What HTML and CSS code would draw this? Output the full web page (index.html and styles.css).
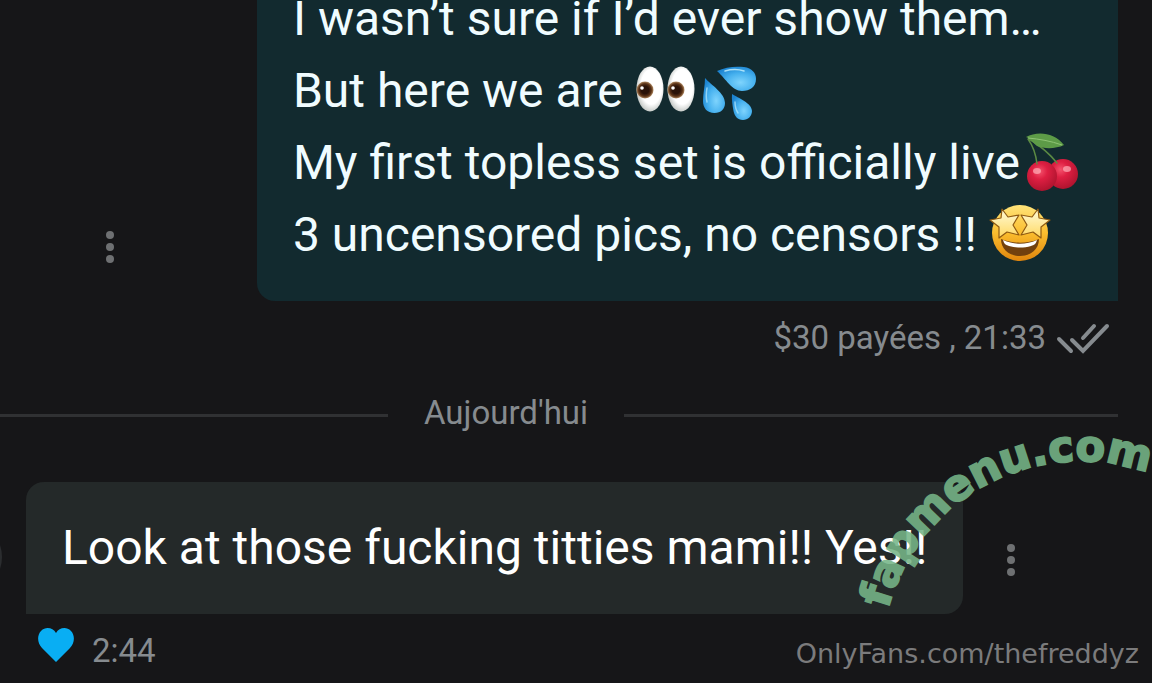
FILE: index.html
```html
<!DOCTYPE html>
<html lang="fr">
<head>
    <meta charset="UTF-8">
    <meta name="viewport" content="width=device-width, initial-scale=1.0">
    <title>Messages</title>
    <link rel="stylesheet" href="styles.css">
</head>
<body>

    <main class="thread">
        <div class="row row-sent">
            <button class="menu" type="button" aria-label="Options">
                <span class="dot"></span><span class="dot"></span><span class="dot"></span>
            </button>
            <div class="bubble bubble-sent">
                <p>I wasn’t sure if I’d ever show them…</p>
                <p>But here we are <svg class="emoji" viewBox="0 0 60 60" role="img" aria-label="eyes">
                    <defs>
                        <radialGradient id="white" cx="55%" cy="45%" r="55%">
                            <stop offset="70%" stop-color="#fff"/>
                            <stop offset="100%" stop-color="#c9cdca"/>
                        </radialGradient>
                        <radialGradient id="iris">
                            <stop offset="45%" stop-color="#2b1308"/>
                            <stop offset="75%" stop-color="#5c3317"/>
                            <stop offset="100%" stop-color="#b08a62"/>
                        </radialGradient>
                    </defs>
                    <ellipse cx="11" cy="28" rx="13.5" ry="22.5" fill="url(#white)"/>
                    <ellipse cx="42" cy="28" rx="13.5" ry="22.5" fill="url(#white)"/>
                    <circle cx="6" cy="29" r="8.5" fill="url(#iris)"/>
                    <circle cx="37" cy="29" r="8.5" fill="url(#iris)"/>
                    <circle cx="3" cy="27" r="1.8" fill="#fff"/>
                    <circle cx="34" cy="27" r="1.8" fill="#fff"/>
                </svg><svg class="emoji" viewBox="0 0 60 60" role="img" aria-label="sweat droplets">
                    <defs>
                        <radialGradient id="drop" cx="60%" cy="65%" r="70%">
                            <stop offset="0%" stop-color="#7fd4fd"/>
                            <stop offset="55%" stop-color="#45b0ee"/>
                            <stop offset="100%" stop-color="#1c83d0"/>
                        </radialGradient>
                    </defs>
                    <path d="M14 10C22 6 32 5 41 6c8 1 12 6 12 12 0 8-6 12-14 12C29 30 23 18 14 10z" fill="url(#drop)"/>
                    <path d="M2 17C8 24 22 32 22 42c0 6-4 10-10.500 10C4 52 0 47 0 40 0 32 2 25 2 17z" fill="url(#drop)"/>
                    <path d="M29 33c6 4 20 9 20 17 0 5-4 9-9 9-5.500 0-8.500-4-9.500-9-1-6-2-11-1.500-17z" fill="url(#drop)"/>
                    <path d="M22 10c7-2 13-2 19 0" fill="none" stroke="#c8f2ff" stroke-width="1.500" stroke-linecap="round" opacity=".8"/>
                    <path d="M4 27c-1 6-1 10 0 14M32 41c0 5 1 8 3 11" fill="none" stroke="#b5eaff" stroke-width="1.500" stroke-linecap="round" opacity=".7"/>
                </svg></p>
                <p>My first topless set is officially live<svg class="emoji" viewBox="0 0 60 60" role="img" aria-label="cherries">
                    <defs>
                        <radialGradient id="cherry" cx="42%" cy="35%" r="65%">
                            <stop offset="0%" stop-color="#f4526c"/>
                            <stop offset="40%" stop-color="#de1f42"/>
                            <stop offset="100%" stop-color="#b0142f"/>
                        </radialGradient>
                    </defs>
                    <circle cx="39" cy="41" r="15" fill="url(#cherry)"/>
                    <circle cx="18" cy="43" r="15" fill="url(#cherry)"/>
                    <path d="M4 6c5 7 8 16 9 25M5 6c10 6 20 14 28 24" fill="none" stroke="#5b8a43" stroke-width="1.500" stroke-linecap="round"/>
                    <path d="M2 4C13-2 30-1 40 12c-8 4-20 4-27 1C9 10 7 6 2 4z" fill="#5d9b47"/>
                    <path d="M4 5c11 1 23 3 34 7" fill="none" stroke="#8fc474" stroke-width="1"/>
                    <ellipse cx="13" cy="38" rx="4" ry="3" fill="#ffb0b9" opacity=".7"/>
                    <ellipse cx="43" cy="36" rx="4" ry="3" fill="#ffb0b9" opacity=".7"/>
                </svg></p>
                <p>3 uncensored pics, no censors !! <svg class="emoji" viewBox="0 0 60 60" role="img" aria-label="star-struck">
                    <defs>
                        <linearGradient id="face" x2="0" y2="1">
                            <stop offset="0%" stop-color="#ffe47a"/>
                            <stop offset="50%" stop-color="#fbbd2e"/>
                            <stop offset="100%" stop-color="#df850d"/>
                        </linearGradient>
                        <linearGradient id="star" x2="0" y2="1">
                            <stop offset="0%" stop-color="#fffbd9"/>
                            <stop offset="100%" stop-color="#ffd860"/>
                        </linearGradient>
                    </defs>
                    <circle cx="27" cy="28" r="28" fill="url(#face)"/>
                    <path d="M8 34c12 5 26 5 38 0 0 10-8 17-19 17S8 44 8 34z" fill="#71400e"/>
                    <path d="M10 35c11 5 23 5 34 0-1 4-3 5-6 6-7 2-15 2-22 0-3-1-5-2-6-6z" fill="#fff"/>
                    <g fill="url(#star)" stroke="#8f5a12" stroke-width="1.200" stroke-linejoin="round">
                        <path d="M9 4l6 8 11-2-6 10 6 10-12-3-8 6 0-11-9-7 11-2z"/>
                        <path d="M45 4l-6 8-11-2 6 10-6 10 12-3 8 6 0-11 9-7-11-2z"/>
                    </g>
                </svg></p>
            </div>
        </div>
        <div class="meta meta-sent">
            <span>$30 payées , 21:33</span>
            <svg class="checks" viewBox="0 0 54 32" role="img" aria-label="Lu">
                <path d="M3 17l12 12M16 18l11 11L51 4M27 16L38 4" fill="none" stroke="currentColor" stroke-width="4" stroke-linecap="round"/>
            </svg>
        </div>

        <div class="separator"><span>Aujourd'hui</span></div>

        <div class="row">
            <span class="avatar"></span>
            <div class="bubble bubble-received">
                <p>Look at those fucking titties mami!! Yes!!</p>
            </div>
            <button class="menu" type="button" aria-label="Options">
                <span class="dot"></span><span class="dot"></span><span class="dot"></span>
            </button>
        </div>
        <div class="meta">
            <button class="like" type="button" aria-label="J'aime">
                <svg viewBox="0 0 36 34"><path d="M18 34L4 20C-1 15-1 7 3 3c5-5 12-3 15 2 3-5 10-7 15-2 4 4 4 12-1 17z" fill="#09aef3"/></svg>
            </button>
            <span>2:44</span>
        </div>
    </main>

    <svg class="stamp" viewBox="0 0 312 200" role="img" aria-label="fapmenu.com">
        <path id="arc" d="M48 169A199 199 0 0 1 240 21A199 199 0 0 1 380 79" fill="none"/>
        <text><textPath href="#arc">fapmenu.com</textPath></text>
    </svg>
    <div class="credit">OnlyFans.com/thefreddyz</div>

</body>
</html>
```
FILE: styles.css
```css
* {
    box-sizing: border-box;
}
body {
    margin: 0;
    background: #161618;
    color: #868b8f;
    font-family: Roboto, sans-serif;
    font-size: 33px;
    line-height: 38px;
}
p {
    margin: 0;
}
button {
    padding: 0;
    border: 0;
    background: none;
    cursor: pointer;
}

/* newest message stays at the bottom, older ones run off the top */
.thread {
    display: flex;
    flex-direction: column;
    justify-content: flex-end;
    height: 100vh;
    overflow: hidden;
    padding-right: 34px;
}
.row {
    display: flex;
    flex-shrink: 0;
    align-items: flex-end;
}
.row-sent {
    justify-content: flex-end;
}
.bubble {
    padding: 30px 36px;
    border-radius: 18px;
    font-size: 48px;
    line-height: 72px;
}
.bubble-sent {
    padding-right: 34px;
    background: #122a2f;
    color: #f0fcff;
    border-bottom-right-radius: 0;
}
.bubble-received {
    background: #242929;
    color: #fff;
    border-bottom-left-radius: 0;
}
.emoji {
    width: 60px;
    height: 60px;
    margin-left: 4px;
    vertical-align: -14px;
    overflow: visible;
}

.menu {
    display: flex;
    flex-direction: column;
    align-items: center;
    gap: 4px;
    width: 48px;
    margin: 0 24px 38px;
}
.row-sent .menu {
    margin-right: 123px;
}
.dot {
    width: 8px;
    height: 8px;
    border-radius: 50%;
    background: #6e7072;
}
.avatar {
    flex-shrink: 0;
    width: 74px;
    height: 74px;
    margin: 0 24px 20px -72px;
    border-radius: 50%;
    background: #2b2d2f;
}

.meta {
    display: flex;
    flex-shrink: 0;
    align-items: center;
    gap: 18px;
    padding: 18px 8px 13px 38px;
}
.meta-sent {
    justify-content: flex-end;
    gap: 10px;
}
.checks {
    width: 54px;
    height: 32px;
}
.like {
    height: 34px;
    margin: -8px 0 4px;
}
.like svg {
    display: block;
    width: 36px;
    height: 34px;
}

.separator {
    display: flex;
    flex-shrink: 0;
    align-items: center;
    gap: 36px;
    padding: 24px 0 50px;
}
.separator::before,
.separator::after {
    content: "";
    flex: 388;
    height: 3px;
    margin-top: 4px;
    background: #303133;
}
.separator::after {
    flex: 494;
}

/* marks laid over the conversation */
.stamp {
    position: absolute;
    right: 0;
    bottom: 43px;
    width: 312px;
    height: 200px;
    overflow: visible;
    pointer-events: none;
}
.stamp text {
    font-family: "DejaVu Sans", sans-serif;
    font-size: 43px;
    font-weight: bold;
    fill: #76b688;
    stroke: #76b688;
    stroke-width: 2px;
    opacity: 0.88;
}
.credit {
    position: absolute;
    right: 13px;
    bottom: 10px;
    color: #7b7b7c;
    font-family: "DejaVu Sans", sans-serif;
    font-size: 27px;
}
```
